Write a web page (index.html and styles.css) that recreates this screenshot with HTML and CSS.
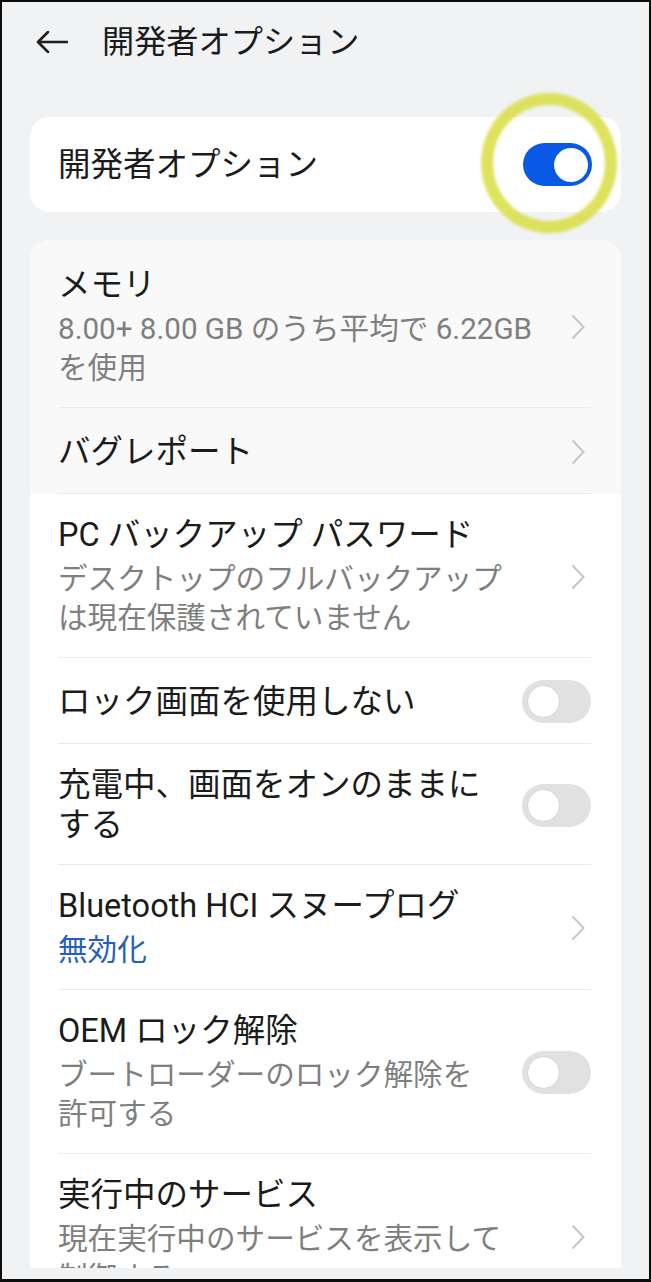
FILE: index.html
```html
<!DOCTYPE html>
<html lang="ja">
<head>
<meta charset="utf-8">
<title>開発者オプション</title>
<link rel="stylesheet" href="styles.css">
</head>
<body>
<div class="frame">
  <header class="header">
    <svg class="back" width="32" height="22" viewBox="0 0 32 22" aria-hidden="true">
      <path d="M31 11H2M12 1L2 11L12 21" fill="none" stroke="#1e1e1e" stroke-width="2.6" stroke-linecap="round" stroke-linejoin="round"/>
    </svg>
    <h1 class="header-title">開発者オプション</h1>
  </header>
  <div class="scroll">
    <section class="card card-master">
      <div class="master-row">
        <div class="title">開発者オプション</div>
        <div class="toggle on"><span class="knob"></span></div>
      </div>
      <div class="ring"></div>
    </section>
    <section class="card card-list">
      <div class="pressed">
        <div class="row">
          <div class="text">
            <div class="title">メモリ</div>
            <div class="sub">8.00+ 8.00 GB のうち平均で 6.22GB<br>を使用</div>
          </div>
          <svg class="chev" width="14" height="26" viewBox="0 0 14 26" aria-hidden="true"><path d="M1.5 1.5L12.5 13L1.5 24.5" fill="none" stroke="#c6c6c6" stroke-width="2"/></svg>
        </div>
        <div class="row">
          <div class="text">
            <div class="title">バグレポート</div>
          </div>
          <svg class="chev" width="14" height="26" viewBox="0 0 14 26" aria-hidden="true"><path d="M1.5 1.5L12.5 13L1.5 24.5" fill="none" stroke="#c6c6c6" stroke-width="2"/></svg>
        </div>
      </div>
      <div class="row">
        <div class="text">
          <div class="title">PC バックアップ パスワード</div>
          <div class="sub">デスクトップのフルバックアップ<br>は現在保護されていません</div>
        </div>
        <svg class="chev" width="14" height="26" viewBox="0 0 14 26" aria-hidden="true"><path d="M1.5 1.5L12.5 13L1.5 24.5" fill="none" stroke="#c6c6c6" stroke-width="2"/></svg>
      </div>
      <div class="row">
        <div class="text">
          <div class="title">ロック画面を使用しない</div>
        </div>
        <div class="toggle"><span class="knob"></span></div>
      </div>
      <div class="row">
        <div class="text">
          <div class="title">充電中、画面をオンのままに<br>する</div>
        </div>
        <div class="toggle"><span class="knob"></span></div>
      </div>
      <div class="row">
        <div class="text">
          <div class="title">Bluetooth HCI スヌープログ</div>
          <div class="sub link">無効化</div>
        </div>
        <svg class="chev" width="14" height="26" viewBox="0 0 14 26" aria-hidden="true"><path d="M1.5 1.5L12.5 13L1.5 24.5" fill="none" stroke="#c6c6c6" stroke-width="2"/></svg>
      </div>
      <div class="row">
        <div class="text">
          <div class="title">OEM ロック解除</div>
          <div class="sub">ブートローダーのロック解除を<br>許可する</div>
        </div>
        <div class="toggle"><span class="knob"></span></div>
      </div>
      <div class="row">
        <div class="text">
          <div class="title">実行中のサービス</div>
          <div class="sub">現在実行中のサービスを表示して<br>制御する</div>
        </div>
        <svg class="chev" width="14" height="26" viewBox="0 0 14 26" aria-hidden="true"><path d="M1.5 1.5L12.5 13L1.5 24.5" fill="none" stroke="#c6c6c6" stroke-width="2"/></svg>
      </div>
    </section>
  </div>
</div>
</body>
</html>
```
FILE: styles.css
```css
html, body {
  margin: 0;
  padding: 0;
}
body {
  width: 651px;
  height: 1282px;
  overflow: hidden;
  font-family: Roboto, "Noto Sans CJK JP", sans-serif;
  color: #1b1b1b;
}
.frame {
  box-sizing: border-box;
  width: 651px;
  height: 1282px;
  border: 2px solid #0c0c0c;
  border-bottom-width: 3px;
  background: #f1f2f4;
  display: flex;
  flex-direction: column;
  overflow: hidden;
}
.header {
  height: 80px;
  flex: none;
  display: flex;
  align-items: center;
  padding-left: 34px;
  gap: 34px;
}
.back {
  display: block;
  flex: none;
}
.header-title {
  margin: 0;
  font-size: 32.2px;
  font-weight: 400;
  line-height: 40px;
  color: #1b1b1b;
}
.scroll {
  flex: 1;
  min-height: 0;
  overflow: hidden;
  margin-bottom: 11px;
  padding: 35px 28px 0;
}
.card {
  background: #ffffff;
  border-radius: 20px;
}
.card-master {
  position: relative;
  height: 95px;
  padding: 0 29px 0 28px;
  box-sizing: border-box;
}
.master-row {
  height: 100%;
  display: flex;
  align-items: center;
  justify-content: space-between;
}
.title {
  font-size: 32.5px;
  line-height: 40px;
  color: #1b1b1b;
}
.sub {
  margin-top: 5px;
  font-size: 29.6px;
  line-height: 39px;
  color: #7f7f7f;
}
.sub.link {
  color: #2360bd;
}
.ring {
  position: absolute;
  left: 451px;
  top: -24px;
  width: 136px;
  height: 140px;
  box-sizing: border-box;
  border-radius: 50%;
  border: 12px solid rgba(216, 222, 66, 0.85);
  filter: blur(1.4px);
  pointer-events: none;
}
.card-list {
  margin-top: 28px;
  padding: 4px 30px 0 28px;
  overflow: hidden;
}
.pressed {
  background: #f9f9f9;
  margin: -4px -30px 0 -28px;
  padding: 4px 30px 0 28px;
}
.row {
  display: flex;
  align-items: center;
  gap: 16px;
  min-height: 86px;
  box-sizing: border-box;
  padding: 21px 0 19px;
  border-bottom: 1px solid #ebebeb;
}
.text {
  flex: 1;
  min-width: 0;
}
.chev {
  display: block;
  flex: none;
  margin-right: 6px;
}
.toggle {
  position: relative;
  flex: none;
  width: 69px;
  height: 43px;
  border-radius: 22px;
  background: #e1e1e1;
}
.toggle .knob {
  position: absolute;
  top: 5px;
  left: 5px;
  width: 33px;
  height: 33px;
  box-sizing: border-box;
  border-radius: 50%;
  background: #ffffff;
  border: 1px solid #d4d4d4;
}
.toggle.on {
  background: #0a58e6;
}
.toggle.on .knob {
  left: auto;
  right: 4px;
  top: 4.5px;
  width: 34px;
  height: 34px;
  border: none;
}
```
